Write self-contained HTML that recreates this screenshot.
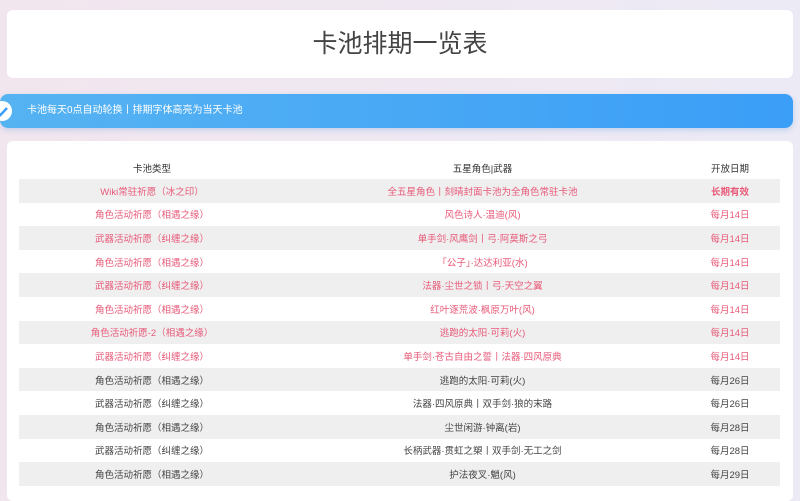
<!DOCTYPE html><html><head><meta charset="utf-8"><style>
body{margin:0;width:800px;height:486px;overflow:hidden;background:linear-gradient(90deg,#f2e6ee,#eceaf5);font-family:"Liberation Sans","Noto Sans CJK SC",sans-serif;position:relative}
.t{position:absolute;left:7px;top:10px;width:786px;height:68px;background:#fff;border-radius:6px;text-align:center;line-height:68px;font-size:25px;color:#444}
.b{position:absolute;left:0;top:94px;width:793px;height:34px;border-radius:8px;background:linear-gradient(90deg,#56b3f2,#3b9ef7);color:#fff;font-size:10px;line-height:34px;box-shadow:0 2px 6px rgba(80,150,230,.3)}
.b span{position:absolute;left:27px}
.ic{position:absolute;left:-8px;top:7px;width:20px;height:20px;border-radius:50%;background:#fff}
.c{position:absolute;left:7px;top:141px;width:786px;height:360px;background:#fff;border-radius:6px}
table{position:absolute;left:12px;top:15px;width:761px;border-collapse:collapse;font-size:9.5px}
td,th{text-align:center;height:23.6px;padding:0}
th{font-weight:normal;color:#333;height:23px}
tr:nth-child(even) td{background:#efefef}
.p td{color:#e85a78}
.d td{color:#444}
</style></head><body>
<div class="t">卡池排期一览表</div>
<div class="b"><div class="ic"><svg width="20" height="20" viewBox="0 0 20 20"><path d="M5 10.5l3.5 3.5 6.5-7" stroke="#3b9ef7" stroke-width="2.5" fill="none"/></svg></div><span>卡池每天0点自动轮换丨排期字体高亮为当天卡池</span></div>
<div class="c"><table>
<tr><th style="width:266px">卡池类型</th><th>五星角色|武器</th><th style="width:100px">开放日期</th></tr>
<tr class="p"><td>Wiki常驻祈愿（冰之印）</td><td>全五星角色丨刻晴封面卡池为全角色常驻卡池</td><td><b>长期有效</b></td></tr>
<tr class="p"><td>角色活动祈愿（相遇之缘）</td><td>风色诗人·温迪(风)</td><td>每月14日</td></tr>
<tr class="p"><td>武器活动祈愿（纠缠之缘）</td><td>单手剑·风鹰剑丨弓·阿莫斯之弓</td><td>每月14日</td></tr>
<tr class="p"><td>角色活动祈愿（相遇之缘）</td><td>「公子」·达达利亚(水)</td><td>每月14日</td></tr>
<tr class="p"><td>武器活动祈愿（纠缠之缘）</td><td>法器·尘世之锁丨弓·天空之翼</td><td>每月14日</td></tr>
<tr class="p"><td>角色活动祈愿（相遇之缘）</td><td>红叶逐荒波·枫原万叶(风)</td><td>每月14日</td></tr>
<tr class="p"><td>角色活动祈愿-2（相遇之缘）</td><td>逃跑的太阳·可莉(火)</td><td>每月14日</td></tr>
<tr class="p"><td>武器活动祈愿（纠缠之缘）</td><td>单手剑·苍古自由之誓丨法器·四风原典</td><td>每月14日</td></tr>
<tr class="d"><td>角色活动祈愿（相遇之缘）</td><td>逃跑的太阳·可莉(火)</td><td>每月26日</td></tr>
<tr class="d"><td>武器活动祈愿（纠缠之缘）</td><td>法器·四风原典丨双手剑·狼的末路</td><td>每月26日</td></tr>
<tr class="d"><td>角色活动祈愿（相遇之缘）</td><td>尘世闲游·钟离(岩)</td><td>每月28日</td></tr>
<tr class="d"><td>武器活动祈愿（纠缠之缘）</td><td>长柄武器·贯虹之槊丨双手剑·无工之剑</td><td>每月28日</td></tr>
<tr class="d"><td>角色活动祈愿（相遇之缘）</td><td>护法夜叉·魈(风)</td><td>每月29日</td></tr>
</table></div>
</body></html>
